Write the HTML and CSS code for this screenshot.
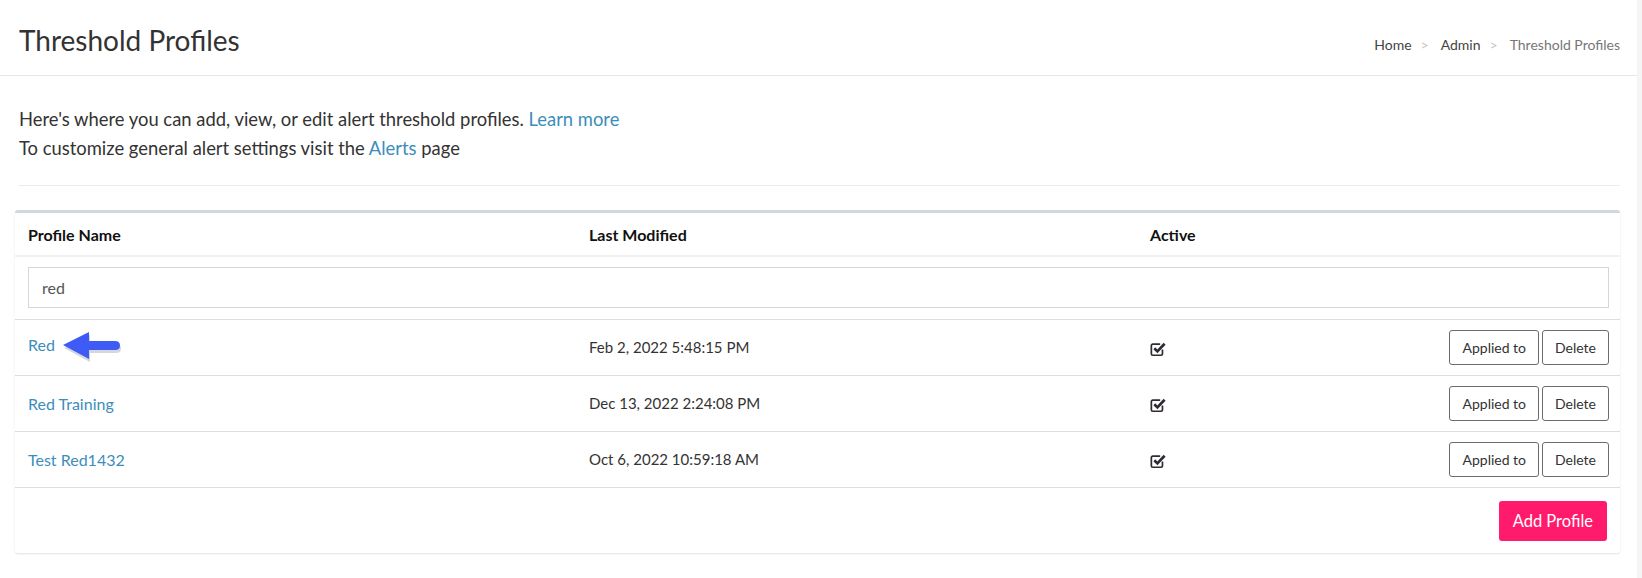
FILE: index.html
```html
<!DOCTYPE html>
<html lang="en">
<head>
  <meta charset="UTF-8" />
  <title>Threshold Profiles</title>
  <link rel="stylesheet" href="styles.css">
</head>
<body>

  <div class="page">
    <header class="content-header">
      <h1>Threshold Profiles</h1>
      <ol class="breadcrumb">
        <li><a href="#">Home</a></li>
        <li><a href="#">Admin</a></li>
        <li class="active">Threshold Profiles</li>
      </ol>
    </header>

    <section class="content">
      <p class="intro">
        Here's where you can add, view, or edit alert threshold profiles. <a href="#">Learn more</a><br>
        To customize general alert settings visit the <a href="#">Alerts</a> page
      </p>
      <hr class="divider">

      <div class="box">
        <table class="profile-table">
          <colgroup>
            <col class="col-name">
            <col class="col-date">
            <col class="col-active">
            <col>
          </colgroup>
          <thead>
            <tr>
              <th>Profile Name</th>
              <th>Last Modified</th>
              <th>Active</th>
              <th></th>
            </tr>
          </thead>
          <tbody>
            <tr class="filter-row">
              <td colspan="4"><input type="text" class="filter-input" value="red"></td>
            </tr>
            <tr>
              <td>
                <a href="#">Red</a>
                <svg class="pointer-arrow" width="60" height="32" viewBox="0 0 60 32">
                  <path d="M2 15 L28 2 L28 11 L54 11 Q59 11 59 15.5 Q59 20 54 20 L28 20 L28 29 Z" fill="#1d1d40" opacity="0.18" transform="translate(1 2)"/>
                  <path d="M2 15 L28 2 L28 11 L54 11 Q59 11 59 15.5 Q59 20 54 20 L28 20 L28 29 Z" fill="#3f5bf6" transform="translate(0 -1)"/>
                </svg>
              </td>
              <td class="date">Feb 2, 2022 5:48:15 PM</td>
              <td><svg class="check" width="17" height="16" viewBox="0 0 15 14"><path d="M11 7.5v3.8a1.2 1.2 0 0 1-1.2 1.2H2.4a1.2 1.2 0 0 1-1.2-1.2V3.9a1.2 1.2 0 0 1 1.2-1.2H9" fill="none" stroke="#2f2a33" stroke-width="1.5"/><path d="M3.8 6.4l2.7 2.7 6.4-6.7" fill="none" stroke="#2f2a33" stroke-width="2.4"/></svg></td>
              <td class="actions"><button class="btn">Applied to</button><button class="btn">Delete</button></td>
            </tr>
            <tr>
              <td><a href="#">Red Training</a></td>
              <td class="date">Dec 13, 2022 2:24:08 PM</td>
              <td><svg class="check" width="17" height="16" viewBox="0 0 15 14"><path d="M11 7.5v3.8a1.2 1.2 0 0 1-1.2 1.2H2.4a1.2 1.2 0 0 1-1.2-1.2V3.9a1.2 1.2 0 0 1 1.2-1.2H9" fill="none" stroke="#2f2a33" stroke-width="1.5"/><path d="M3.8 6.4l2.7 2.7 6.4-6.7" fill="none" stroke="#2f2a33" stroke-width="2.4"/></svg></td>
              <td class="actions"><button class="btn">Applied to</button><button class="btn">Delete</button></td>
            </tr>
            <tr>
              <td><a href="#">Test Red1432</a></td>
              <td class="date">Oct 6, 2022 10:59:18 AM</td>
              <td><svg class="check" width="17" height="16" viewBox="0 0 15 14"><path d="M11 7.5v3.8a1.2 1.2 0 0 1-1.2 1.2H2.4a1.2 1.2 0 0 1-1.2-1.2V3.9a1.2 1.2 0 0 1 1.2-1.2H9" fill="none" stroke="#2f2a33" stroke-width="1.5"/><path d="M3.8 6.4l2.7 2.7 6.4-6.7" fill="none" stroke="#2f2a33" stroke-width="2.4"/></svg></td>
              <td class="actions"><button class="btn">Applied to</button><button class="btn">Delete</button></td>
            </tr>
          </tbody>
        </table>

        <div class="box-footer">
          <button class="btn-add">Add Profile</button>
        </div>
      </div>
    </section>
  </div>

</body>
</html>
```

FILE: styles.css
```css
* {
  box-sizing: border-box;
}

html {
  background: #f5f5f6;
}

body {
  margin: 0 5px 0 0;
  min-height: 100vh;
  background: #fff;
  font-family: Lato, "Noto Sans", sans-serif;
  font-size: 16px;
  color: #333;
}

a {
  color: #3c8dbc;
  text-decoration: none;
}

.content-header {
  display: flex;
  justify-content: space-between;
  align-items: center;
  height: 76px;
  padding: 4px 17px 0 19px;
  border-bottom: 1px solid #e6e6e6;
}

.content-header h1 {
  margin: 0;
  font-size: 28px;
  font-weight: 400;
  color: #333;
}

.breadcrumb {
  display: flex;
  margin: 10px 0 0;
  padding: 0;
  list-style: none;
  font-size: 14px;
}

.breadcrumb a {
  color: #444;
}

.breadcrumb li + li::before {
  content: ">";
  color: #c4c4c4;
  padding: 0 12px 0 9px;
}

.breadcrumb .active {
  color: #777;
}

.content {
  padding: 0 17px 0 15px;
}

.intro {
  margin: 0;
  padding: 29px 0 0 4px;
  font-size: 18.4px;
  line-height: 29px;
  color: #333;
}

.divider {
  margin: 22px 0 24px 4px;
  border: 0;
  border-top: 1px solid #ececec;
}

.box {
  background: #fff;
  border-top: 3px solid #d2d6de;
  border-radius: 3px;
  box-shadow: 0 1px 2px rgba(0, 0, 0, 0.12);
}

.profile-table {
  width: 100%;
  border-collapse: collapse;
  table-layout: fixed;
}

.col-name,
.col-date {
  width: 561px;
}

.col-active {
  width: 200px;
}

.profile-table th {
  height: 43px;
  padding: 0 13px;
  text-align: left;
  font-weight: 700;
  color: #111;
  border-bottom: 2px solid #f2f2f4;
}

.profile-table td {
  height: 56px;
  padding: 0 13px;
  border-top: 1px solid #dedede;
  color: #333;
  vertical-align: middle;
}

.profile-table .date {
  font-size: 15px;
}

.profile-table .filter-row td {
  height: 63px;
  border-top: 0;
  padding: 0 11px 0 13px;
}

.filter-input {
  width: 100%;
  height: 41px;
  padding: 0 13px;
  border: 1px solid #d2d6de;
  font: inherit;
  color: #555;
  outline: none;
}

.pointer-arrow {
  vertical-align: middle;
  margin-left: 2px;
}

.check {
  vertical-align: middle;
}

.actions {
  text-align: right;
  white-space: nowrap;
}

.profile-table .actions {
  padding-right: 11px;
}

.btn {
  height: 35px;
  margin-left: 3px;
  padding: 0 12px;
  background: #fff;
  border: 1px solid #6b6b6b;
  border-radius: 3px;
  font-family: inherit;
  font-size: 14px;
  color: #333;
  cursor: pointer;
}

.box-footer {
  display: flex;
  justify-content: flex-end;
  padding: 13px 13px 12px;
  border-top: 1px solid #dedede;
}

.btn-add {
  height: 40px;
  padding: 0 14px;
  background: #ff1a6b;
  border: none;
  border-radius: 3px;
  font-family: inherit;
  font-size: 16.5px;
  color: #fff;
  cursor: pointer;
}
```
